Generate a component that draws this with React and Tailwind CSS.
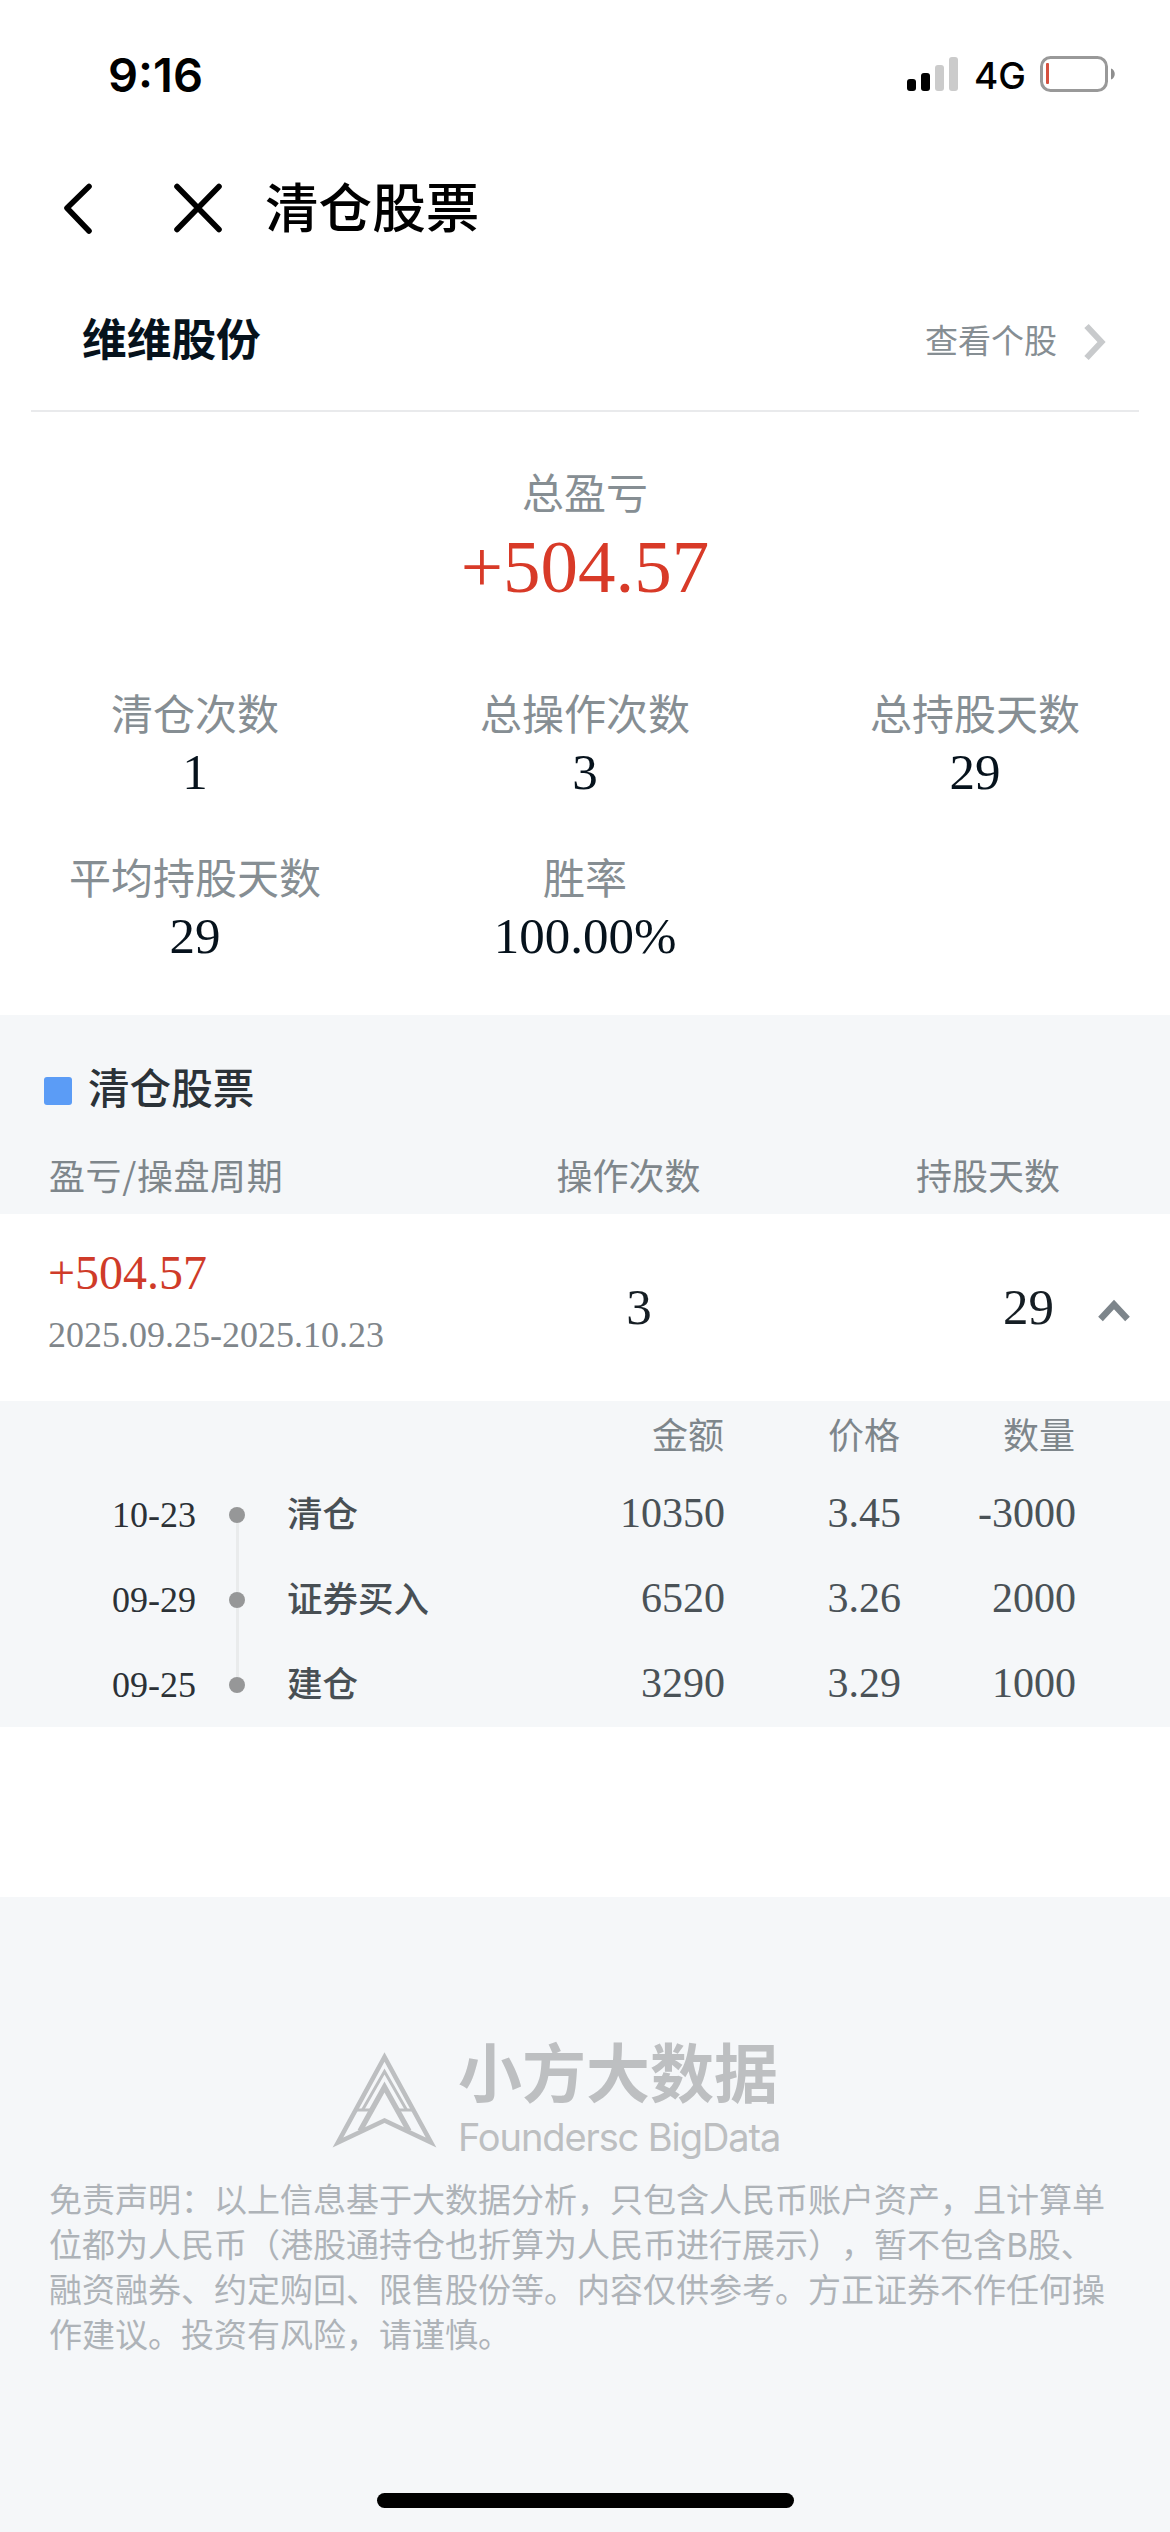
import React, { useState } from "react";

const stats = [
  { label: "清仓次数", value: "1" },
  { label: "总操作次数", value: "3" },
  { label: "总持股天数", value: "29" },
  { label: "平均持股天数", value: "29" },
  { label: "胜率", value: "100.00%" },
];

const trades = [
  { date: "10-23", action: "清仓", amount: "10350", price: "3.45", count: "-3000" },
  { date: "09-29", action: "证券买入", amount: "6520", price: "3.26", count: "2000" },
  { date: "09-25", action: "建仓", amount: "3290", price: "3.29", count: "1000" },
];

const disclaimer = [
  "免责声明：以上信息基于大数据分析，只包含人民币账户资产，且计算单",
  "位都为人民币（港股通持仓也折算为人民币进行展示），暂不包含B股、",
  "融资融券、约定购回、限售股份等。内容仅供参考。方正证券不作任何操",
  "作建议。投资有风险，请谨慎。",
];

const StatusBar = () => (
  <div className="flex h-[148px] items-center justify-between pl-[108px] pr-[54px] font-['Inter',sans-serif] text-black">
    <span className="text-[47px] font-semibold leading-none">9:16</span>
    <div className="flex items-center">
      <div className="flex h-[34px] items-end gap-[5px]">
        <span className="h-[12px] w-[9px] rounded-[3px] bg-black" />
        <span className="h-[18px] w-[9px] rounded-[3px] bg-black" />
        <span className="h-[26px] w-[9px] rounded-[3px] bg-[#cbcbcb]" />
        <span className="h-[34px] w-[9px] rounded-[3px] bg-[#cbcbcb]" />
      </div>
      <span className="ml-[16px] w-[66px] pt-[3px] text-[37px] font-medium leading-none">4G</span>
      <svg width="76" height="36" viewBox="0 0 76 36" fill="none">
        <rect x="1.5" y="1.5" width="65" height="33" rx="9" stroke="#999999" strokeWidth="3" />
        <rect x="6" y="7" width="3" height="21" rx="1" fill="#d5503f" />
        <path d="M71 12.5C76 14 76 22 71 23.5Z" fill="#8e8e8e" />
      </svg>
    </div>
  </div>
);

const NavBar = () => (
  <div className="flex h-[120px] items-center pl-[62px] text-black">
    <svg width="32" height="52" viewBox="0 0 32 52" fill="none" stroke="currentColor" strokeWidth="5.6" strokeLinecap="round" strokeLinejoin="round">
      <path d="M27 4.5L5 26L27 49" />
    </svg>
    <svg className="ml-[78px]" width="52" height="52" viewBox="0 0 52 52" fill="none" stroke="currentColor" strokeWidth="5.6" strokeLinecap="round">
      <path d="M5 4.5L47 47.5M47 4.5L5 47.5" />
    </svg>
    <h1 className="mb-[7px] ml-[41px] text-[53.6px] font-medium leading-none">清仓股票</h1>
  </div>
);

const Logo = () => (
  <svg className="mt-[14px]" width="107" height="100" viewBox="0 0 107 100" fill="none" stroke="currentColor" strokeMiterlimit="10">
    <path d="M53.5 6L7 91.5L53.5 69.5L100 91.5Z" strokeWidth="4.6" />
    <path d="M31.5 59L53.5 20.5L75.5 59" strokeWidth="3" />
    <path d="M29 80L53.5 36L78 80" strokeWidth="5.4" />
    <path d="M25 59H39M68 59H82" strokeWidth="3" />
  </svg>
);

const TradeRow = ({ trade, isFirst, isLast }) => (
  <div className="flex h-[85px] items-center">
    <span className="w-[229px] pl-[112px] font-['Liberation_Serif',serif] text-[36px] text-[#2b3136]">{trade.date}</span>
    <div className="flex h-full w-[16px] flex-col items-center">
      <span className={`w-[3px] flex-1 ${isFirst ? "bg-transparent" : "bg-[#e9ebec]"}`} />
      <span className="h-[16px] w-[16px] rounded-full bg-[#969798]" />
      <span className={`w-[3px] flex-1 ${isLast ? "bg-transparent" : "bg-[#e9ebec]"}`} />
    </div>
    <span className="mb-[6px] w-[243px] pl-[42px] text-[35.5px] font-medium leading-none text-[#484f54]">{trade.action}</span>
    <div className="mb-[3px] flex font-['Liberation_Serif',serif] text-[42px] text-[#4a5257]">
      <span className="w-[237px] text-right">{trade.amount}</span>
      <span className="w-[176px] text-right">{trade.price}</span>
      <span className="w-[175px] text-right">{trade.count}</span>
    </div>
  </div>
);

const App = () => {
  const [open, setOpen] = useState(true);

  return (
    <div className="flex h-[2532px] w-[1170px] flex-col overflow-hidden bg-white font-['Noto_Sans_CJK_SC',sans-serif]">
      <StatusBar />
      <NavBar />

      {/* Stock name */}
      <div className="mx-[31px] flex h-[144px] items-center justify-between border-b-2 border-[#e9eaec] pl-[51px] pr-[33px]">
        <h2 className="mb-[4px] text-[44.7px] font-bold leading-none text-[#06121c]">维维股份</h2>
        <div className="flex items-center text-[33px] leading-none text-[#868e93]">
          <span>查看个股</span>
          <svg className="ml-[27px] mt-[5px]" width="22" height="38" viewBox="0 0 22 38" fill="none" stroke="#c8cacc" strokeWidth="6">
            <path d="M2.5 3L17.5 19L2.5 35" />
          </svg>
        </div>
      </div>

      {/* Total profit */}
      <div className="flex flex-col items-center pt-[49px]">
        <span className="text-[42px] leading-[60px] text-[#868e93]">总盈亏</span>
        <span className="mt-[4px] font-['Liberation_Serif',serif] text-[75px] leading-[84px] text-[#d83a28]">+504.57</span>
      </div>

      <div className="mt-[73px] grid h-[333px] grid-cols-3 content-start">
        {stats.map((item) => (
          <div key={item.label} className="flex h-[164px] flex-col items-center">
            <span className="text-[42px] leading-[60px] text-[#868e93]">{item.label}</span>
            <span className="font-['Liberation_Serif',serif] text-[51px] leading-[60px] text-[#06121c]">{item.value}</span>
          </div>
        ))}
      </div>

      {/* Cleared positions */}
      <div className="h-[199px] bg-[#f5f7f9] pt-[41px]">
        <div className="flex h-[60px] items-center pl-[44px]">
          <span className="mt-[10px] h-[28px] w-[28px] rounded-[3px] bg-[#5b9cf6]" />
          <h3 className="ml-[16px] text-[41.6px] font-medium leading-[60px] text-[#2b3238]">清仓股票</h3>
        </div>
        <div className="mt-[28px] flex text-[36px] leading-[60px] text-[#7e868b]">
          <span className="w-[507px] pl-[49px] tracking-[0.6px]">盈亏/操盘周期</span>
          <span className="w-[243px] text-center">操作次数</span>
          <span className="w-[310px] text-right">持股天数</span>
        </div>
      </div>

      <div className="flex h-[187px] items-center font-['Liberation_Serif',serif]" onClick={() => setOpen(!open)}>
        <div className="mb-[8px] flex w-[507px] flex-col pl-[48px]">
          <span className="text-[48px] leading-[62px] text-[#cf3b29]">+504.57</span>
          <span className="text-[36px] leading-[62px] text-[#7f868b]">2025.09.25-2025.10.23</span>
        </div>
        <span className="w-[264px] text-center text-[51px] text-[#161e24]">3</span>
        <span className="w-[283px] text-right text-[51px] text-[#161e24]">29</span>
        <svg className="ml-[43px] mt-[6px]" width="34" height="26" viewBox="0 0 34 26" fill="none" stroke="#7d858b" strokeWidth="6.4">
          <path d={open ? "M3.5 21L17 6.5L30.5 21" : "M3.5 5L17 20L30.5 5"} />
        </svg>
      </div>

      {open && (
        <div className="h-[326px] bg-[#f5f7f9]">
          <div className="flex h-[71px] pl-[488px] text-[36px] leading-[64px] text-[#7e868b]">
            <span className="w-[236px] text-right">金额</span>
            <span className="w-[176px] text-right">价格</span>
            <span className="w-[175px] text-right">数量</span>
          </div>
          {trades.map((trade, i) => (
            <TradeRow key={trade.date} trade={trade} isFirst={i === 0} isLast={i === trades.length - 1} />
          ))}
        </div>
      )}

      {/* Footer */}
      <div className="mt-[170px] flex flex-1 flex-col bg-[#f5f7f9]">
        <div className="flex h-[279px] pl-[331px] pt-[140px] text-[#bdbfc1]">
          <Logo />
          <div className="-mt-[2px] ml-[20px] flex flex-col whitespace-nowrap">
            <span className="text-[64px] font-bold leading-[68px]">小方大数据</span>
            <span className="mt-[12px] font-['Inter',sans-serif] text-[38px] leading-[44px] tracking-[-1.1px]">Foundersc BigData</span>
          </div>
        </div>
        <p className="pl-[49px] text-[33px] leading-[45px] text-[#aeb3b8] [text-spacing-trim:space-all]">
          {disclaimer.map((line) => (
            <span key={line} className="block whitespace-nowrap">{line}</span>
          ))}
        </p>
        <div className="mx-auto mb-[24px] mt-auto h-[15px] w-[417px] rounded-full bg-black" />
      </div>
    </div>
  );
};

export default App;
